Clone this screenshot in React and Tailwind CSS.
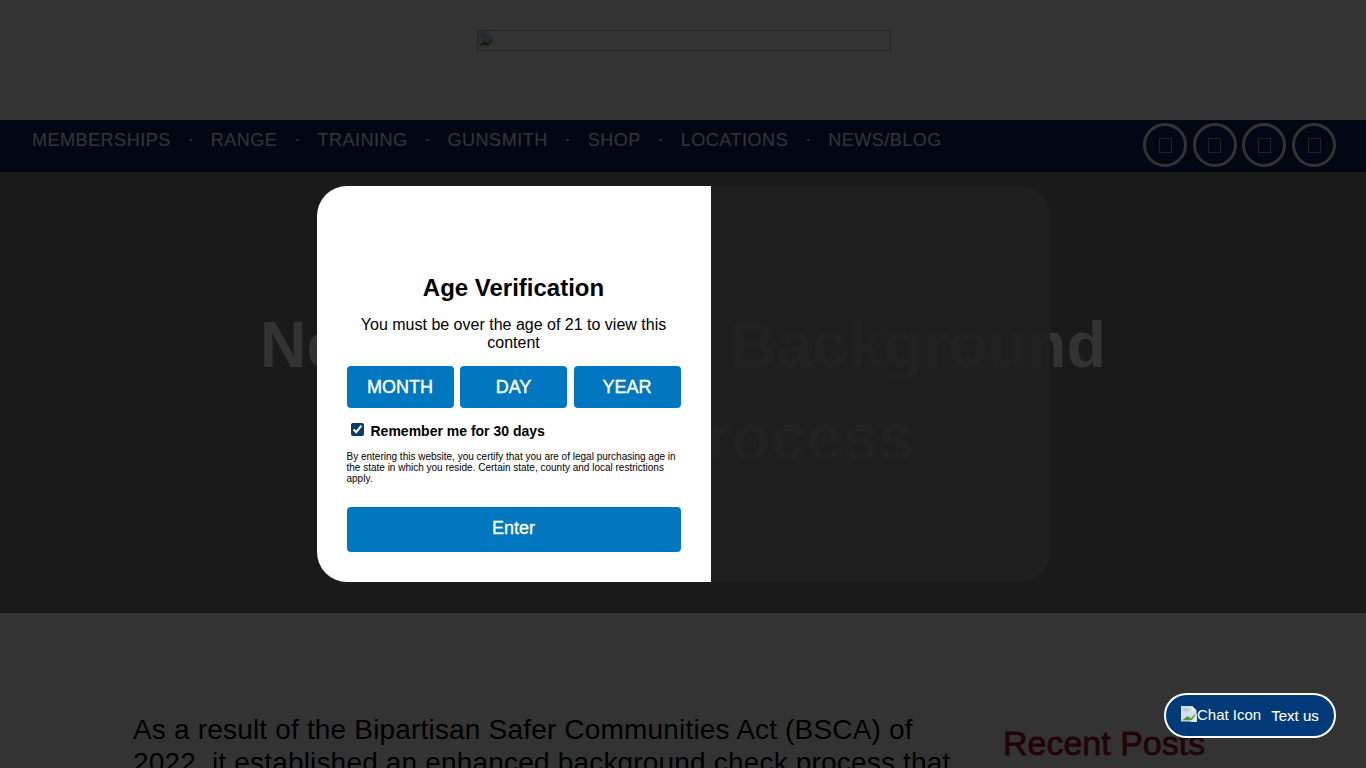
import React from 'react';

const navItems = ['Memberships', 'Range', 'Training', 'Gunsmith', 'Shop', 'Locations', 'News/Blog'];

function BrokenImage({ className }) {
  return (
    <svg viewBox="1 1 14.5 14.5" className={className}>
      <path d="M1 1h10l4 4v10H1z" fill="#d9dfe8" />
      <path d="M11 1v4h4z" fill="#fff" />
      <path d="M3 3h5v3H3z" fill="#b7c7e6" />
      <path d="M2 14l5-4 3 2 4-4v6H2z" fill="#4f9a3c" />
      <path d="M9 16L16 7v9z" fill="#fff" fillOpacity="0.8" />
    </svg>
  );
}

function SocialIcon() {
  return (
    <div className="flex h-[44px] w-[44px] items-center justify-center rounded-full border-[3px] border-white">
      <div className="h-[15px] w-[13px] border border-white/60" />
    </div>
  );
}

export default function App() {
  return (
    <div className="relative h-[768px] overflow-hidden bg-white font-['Liberation_Sans',Arial,sans-serif]">
      <header className="flex h-[120px] justify-center pt-[30px]">
        <div className="ml-[2px] h-[21px] w-[414px] border border-[#bbb]">
          <BrokenImage className="h-[16px] w-[16px]" />
        </div>
      </header>

      <nav className="flex h-[52px] items-start justify-between bg-[#052a66] pl-[32px] pr-[30px]">
        <ul className="flex items-center pt-[6px]">
          {navItems.map((item, i) => (
            <li key={item} className="flex items-center">
              {i > 0 && <span className="w-[40px] text-center text-[18px] text-white">·</span>}
              <a className="text-[18px] uppercase leading-[22px] tracking-[0.52px] text-white">{item}</a>
            </li>
          ))}
        </ul>
        <div className="flex gap-[5.67px] pt-[3px]">
          <SocialIcon />
          <SocialIcon />
          <SocialIcon />
          <SocialIcon />
        </div>
      </nav>

      <section className="flex h-[441px] justify-center bg-[#828282] pt-[127px] text-center">
        <h1 className="text-[64px] font-bold leading-[92px] tracking-[0.3px] text-white">
          New NICS Gun Background
          <br />
          Check Process
        </h1>
      </section>

      <main className="grid grid-cols-[870px_1fr] pl-[133px] pt-[100px]">
        <p className="w-[830px] text-[28px] leading-[33px] tracking-[0.18px] text-black">
          As a result of the Bipartisan Safer Communities Act (BSCA) of 2022, it established an enhanced background check process that
        </p>
        <h2 className="mt-[10px] text-[34px] leading-[40px] text-[#a01420] [-webkit-text-stroke:0.8px_#a01420]">Recent Posts</h2>
      </main>

      <div className="absolute inset-0 flex items-center justify-center bg-black/80">
        <div className="flex h-[396px] w-[733px]">
          <div className="flex w-[394px] flex-col justify-end rounded-l-[30px] bg-white px-[30px] pb-[30px] text-center text-black">
            <h2 className="text-[24px] font-bold leading-[30px]">Age Verification</h2>
            <p className="mt-[13px] text-[16px] leading-[18px]">You must be over the age of 21 to view this content</p>
            <div className="mt-[14px] grid grid-cols-[107px_107px_107px] justify-between">
              {['Month', 'Day', 'Year'].map((label) => (
                <button
                  key={label}
                  type="button"
                  className="h-[42px] rounded-[4px] bg-[#0077be] text-[18px] uppercase text-white [-webkit-text-stroke:0.4px_white]"
                >
                  {label}
                </button>
              ))}
            </div>
            <label className="mt-[13px] flex items-center pl-[4px] text-left text-[14px] font-bold leading-[18px]">
              <input type="checkbox" defaultChecked className="-mt-[2px] h-[13px] w-[13px] accent-[#0b3a6b]" />
              <span className="ml-[7px] mt-[1px]">Remember me for 30 days</span>
            </label>
            <p className="mt-[11px] text-left text-[10px] leading-[11px]">
              By entering this website, you certify that you are of legal purchasing age in the state in which you reside. Certain state, county and local restrictions apply.
            </p>
            <button type="button" className="mt-[23px] h-[45px] rounded-[4px] bg-[#0077be] pb-[2px] text-[18px] text-white [-webkit-text-stroke:0.3px_white]">
              Enter
            </button>
          </div>
          <div className="flex-1 rounded-r-[30px] bg-[#202020]/90" />
        </div>
      </div>

      <a className="absolute bottom-[30px] right-[30px] flex h-[45px] w-[172px] items-center rounded-full border-2 border-white bg-[#003a78] pl-[15px] text-[14px] text-white">
        <BrokenImage className="-mt-[3px] h-[16px] w-[16px]" />
        <span className="text-[15px]">Chat Icon</span>
        <span className="ml-[10px] pt-[2px] text-[15px] [-webkit-text-stroke:0.1px_white]">Text us</span>
      </a>
    </div>
  );
}
